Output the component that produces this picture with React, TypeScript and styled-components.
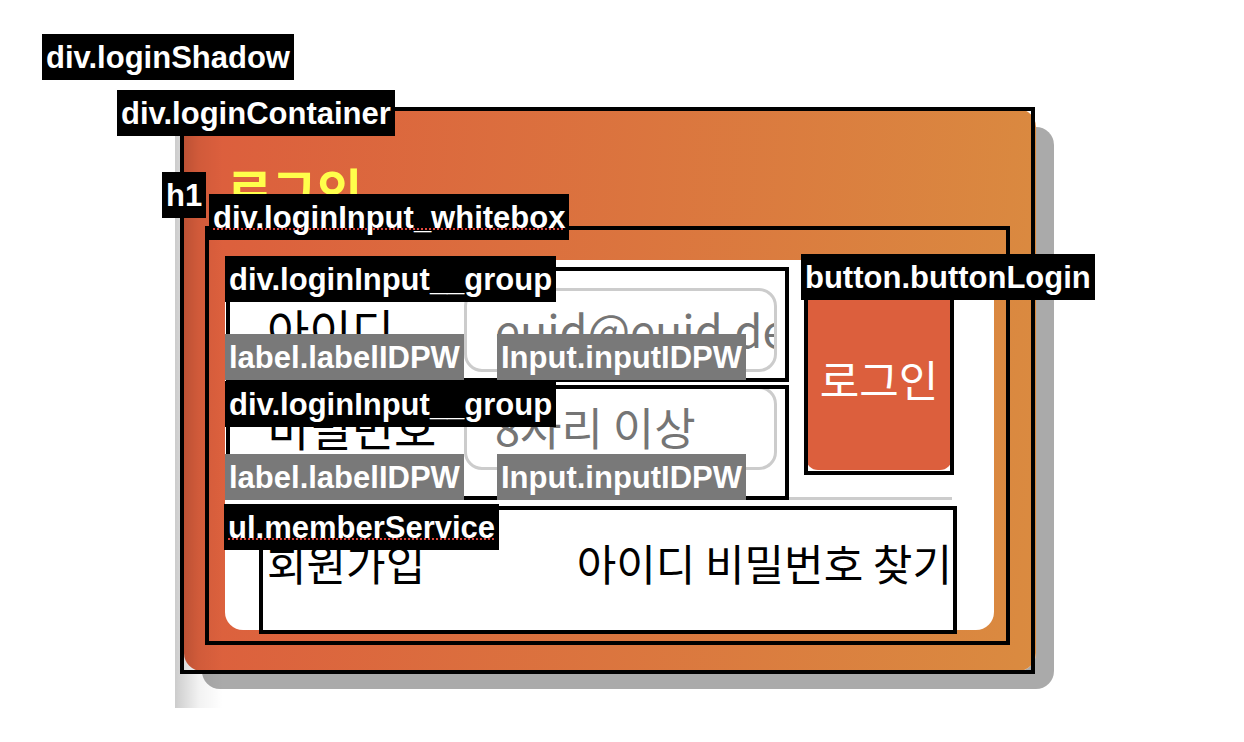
import React from "react";
import styled, { createGlobalStyle } from "styled-components";

const GlobalStyle = createGlobalStyle`
  *, *::before, *::after { box-sizing: border-box; }
  body { margin: 0; background: #fff; }
`;

const koreanFont = `"Noto Sans CJK KR", "Noto Sans", sans-serif`;

const Page = styled.main`
  padding: 107px 181px 33px 175px;
  font-family: ${koreanFont};
`;

const Stage = styled.div`
  position: relative;
  padding: 2px 27px 37px 9px;

  &::after {
    content: "";
    position: absolute;
    top: 0;
    bottom: 0;
    left: 0;
    width: 48px;
    background: linear-gradient(90deg, rgba(0, 0, 0, 0.2), rgba(0, 0, 0, 0.05) 50%, rgba(0, 0, 0, 0));
    pointer-events: none;
  }
`;

const Card = styled.section`
  position: relative;
  padding: 0 42px 41px 41px;
  border-radius: 18px;
  background: linear-gradient(94deg, #dc5f3d 4%, #da8b40);
  box-shadow: 18px 18px 0 #aaa;
`;

const Title = styled.h1`
  margin: 0;
  padding: 44px 0 35px 2px;
  color: #ffff4b;
  font-size: 49px;
  font-weight: 700;
  line-height: 72px;
`;

const Panel = styled.div`
  position: relative;
  padding: 28px 42px 0;
  border-radius: 18px;
  background: #fff;
`;

const Form = styled.form`
  display: flex;
  gap: 29px;
  padding-bottom: 27px;
  border-bottom: 3px solid #ccc;
`;

const Fields = styled.div`
  flex: 1;
  display: flex;
  flex-direction: column;
  gap: 14px;
  min-width: 0;
`;

const Group = styled.div`
  position: relative;
  display: flex;
  align-items: center;
`;

const FieldLabel = styled.label`
  flex: 0 0 197px;
  padding-bottom: 4px;
  font-size: 46px;
  line-height: 80px;
  color: #000;
`;

const Input = styled.input`
  flex: 1;
  min-width: 0;
  height: 84px;
  padding: 0 0 4px 28px;
  border: 3px solid #ccc;
  border-radius: 18px;
  background: #fff;
  font-family: ${koreanFont};
  font-size: 45px;

  &::placeholder {
    color: #757575;
    opacity: 1;
  }
`;

const ButtonArea = styled.div`
  position: relative;
  flex: 0 0 146px;
  display: grid;
`;

const LoginButton = styled.button`
  padding: 0 0 2px;
  border: 0;
  border-radius: 12px;
  background: #dc5f3d;
  color: #fff;
  font-family: ${koreanFont};
  font-size: 43px;
`;

const Services = styled.ul`
  position: relative;
  display: flex;
  justify-content: space-between;
  margin: 0;
  padding: 32px 0 38px;
  list-style: none;
`;

const ServiceLink = styled.a`
  color: #000;
  font-size: 43px;
  line-height: 60px;
  text-decoration: none;
  white-space: nowrap;
`;

/* Black rectangle traced around an annotated element; values are top, right, bottom, left. */
const Frame = styled.span<{ $inset: string }>`
  position: absolute;
  inset: ${(p) => p.$inset};
  z-index: 1;
  border: 4px solid #000;
  pointer-events: none;
`;

const Tag = styled.span<{ $x: number; $y: number; $muted?: boolean; $marked?: boolean }>`
  position: absolute;
  left: ${(p) => p.$x}px;
  top: ${(p) => p.$y}px;
  z-index: 2;
  padding: 2px 4px 0;
  background: ${(p) => (p.$muted ? "#797979" : "#000")};
  color: #fff;
  font-family: "Liberation Sans", Arial, sans-serif;
  font-size: 31px;
  font-weight: 700;
  line-height: 44px;
  white-space: nowrap;
  text-decoration: ${(p) => (p.$marked ? "underline dotted #e5483f 2px" : "none")};
  text-underline-offset: 0;
  text-decoration-skip-ink: none;
  pointer-events: none;
`;

export default function App() {
  return (
    <>
      <GlobalStyle />
      <Page>
        <Stage>
          <Card>
            <Title>로그인</Title>
            <Panel>
              <Form onSubmit={(e) => e.preventDefault()}>
                <Fields>
                  <Group>
                    <FieldLabel htmlFor="userId">아이디</FieldLabel>
                    <Input id="userId" type="text" placeholder="euid@euid.dev" />
                    <Frame $inset="-21px -12px -10px -41px" />
                    <Tag $x={-42} $y={-32}>div.loginInput__group</Tag>
                    <Tag $x={-42} $y={46} $muted>label.labelIDPW</Tag>
                    <Tag $x={230} $y={46} $muted>Input.inputIDPW</Tag>
                  </Group>
                  <Group>
                    <FieldLabel htmlFor="userPw">비밀번호</FieldLabel>
                    <Input id="userPw" type="password" placeholder="8자리 이상" />
                    <Frame $inset="-1px -12px -30px -41px" />
                    <Tag $x={-42} $y={-5}>div.loginInput__group</Tag>
                    <Tag $x={-42} $y={68} $muted>label.labelIDPW</Tag>
                    <Tag $x={230} $y={68} $muted>Input.inputIDPW</Tag>
                  </Group>
                </Fields>
                <ButtonArea>
                  <LoginButton type="submit">로그인</LoginButton>
                  <Frame $inset="-3px -2px -5px -2px" />
                  <Tag $x={-5} $y={-34}>button.buttonLogin</Tag>
                </ButtonArea>
              </Form>
              <Services>
                <li><ServiceLink href="#join">회원가입</ServiceLink></li>
                <li><ServiceLink href="#find">아이디 비밀번호 찾기</ServiceLink></li>
                <Frame as="li" $inset="6px -5px -4px -8px" aria-hidden="true" />
                <Tag as="li" $x={-43} $y={4} $marked>ul.memberService</Tag>
              </Services>
              <Frame $inset="-34px -16px -15px -20px" />
              <Tag $x={-16} $y={-66} $marked>div.loginInput_whitebox</Tag>
            </Panel>
            <Frame $inset="-2px 1px -3px -4px" />
            <Tag $x={-142} $y={-75}>div.loginShadow</Tag>
            <Tag $x={-67} $y={-19}>div.loginContainer</Tag>
            <Tag $x={-22} $y={63}>h1</Tag>
          </Card>
        </Stage>
      </Page>
    </>
  );
}
